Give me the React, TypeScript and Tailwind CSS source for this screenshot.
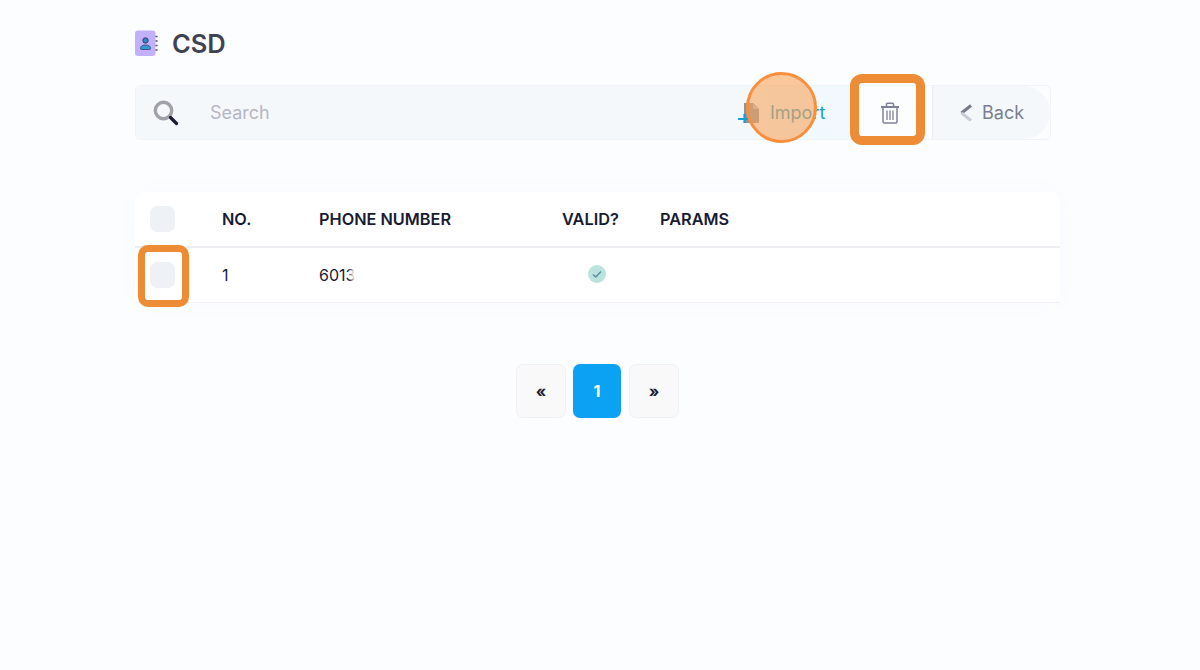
function ContactBook() {
  return (
    <svg width="23" height="27" viewBox="0 0 23 27" className="shrink-0">
      <rect x="0" y="0.5" width="20.500" height="25.500" rx="3" fill="#c3b0fa" />
      <circle cx="10.500" cy="10.500" r="2.700" fill="#2f86c9" stroke="#3b3a6b" strokeWidth="1" />
      <path d="M5.500 18.500c0-2.500 2-3.500 5-3.500s5 1 5 3.500c0 .6-.4 1-1 1h-8c-.6 0-1-.4-1-1z" fill="#2f9bd6" stroke="#3b3a6b" strokeWidth="0.800" />
      <path d="M20.500 6.500h2M20.500 11h2M20.500 15.500h2M20.500 20h2" stroke="#4a4a68" strokeWidth="1.600" />
    </svg>
  );
}

function SearchGlyph() {
  return (
    <svg width="26" height="26" viewBox="0 0 26 26">
      <circle cx="10.500" cy="10.500" r="8.200" fill="none" stroke="#a1a1aa" strokeWidth="3.400" />
      <path d="M17.500 17.500l6 6" stroke="#1b1b33" strokeWidth="3.200" strokeLinecap="round" />
    </svg>
  );
}

function ImportGlyph() {
  return (
    <svg width="24" height="24" viewBox="0 0 24 24" className="shrink-0">
      <path d="M7 2h9l6 6v13a1 1 0 0 1-1 1H8a1 1 0 0 1-1-1z" fill="#8a95a0" />
      <path d="M16 2l6 6h-6z" fill="#b6bdc4" />
      <path d="M1 18h12M7.500 13v9" stroke="#159fd6" strokeWidth="2.200" />
    </svg>
  );
}

function TrashGlyph() {
  return (
    <svg width="20" height="22" viewBox="0 0 20 22" fill="none" stroke="#7e8299" strokeWidth="1.500">
      <path d="M1 5h18" strokeWidth="2" />
      <path d="M6.500 4.500V2.200c0-.6.400-1 1-1h5c.6 0 1 .4 1 1v2.300" />
      <path d="M3 5v14.500c0 .8.600 1.500 1.500 1.500h11c.9 0 1.500-.7 1.500-1.500V5" />
      <path d="M7 8.500v9.500M10 8.500v9.500M13 8.500v9.500" strokeWidth="1.300" />
    </svg>
  );
}

function BackChevron() {
  return (
    <svg width="14" height="18" viewBox="0 0 14 18" fill="none" strokeWidth="3" className="shrink-0">
      <path d="M12 1.500L2.500 9" stroke="#75798b" />
      <path d="M2.500 9l9.500 7.500" stroke="#c9ccd6" />
    </svg>
  );
}

function CheckBox() {
  return <div className="h-[26px] w-[25px] rounded-[7px] bg-[#eef1f5]" />;
}

export default function App() {
  return (
    <div className="min-h-[670px] bg-[#fcfdff] pl-[135px] pr-[140px] pt-[30px] font-['Inter','Liberation_Sans',sans-serif]">
      <div className="flex h-[27px] items-center gap-[14px]">
        <ContactBook />
        <h1 className="pt-[2px] text-[25.500px] font-semibold text-[#3f4254]">CSD</h1>
      </div>

      <div className="relative mt-[28px] flex h-[55px] w-[916px] items-center rounded-[5px] border border-[#f0f3f7]">
        <div className="flex h-full flex-1 items-center rounded-l-[5px] bg-[#f5f8fb] pl-[17px]">
          <SearchGlyph />
          <span className="ml-[31px] text-[18px] text-[#b5b5c3]">Search</span>
        </div>
        <div className="flex h-full w-[140px] items-center gap-[9px] bg-gradient-to-r from-[#f5f8fb] via-[#f0f9fd] to-[#f1f9fd] pl-[23px]">
          <ImportGlyph />
          <span className="text-[18px] text-[#1f9cc4]">Import</span>
        </div>
        <div className="flex h-full w-[78px] items-center justify-center pr-[6px]">
          <TrashGlyph />
        </div>
        <div className="flex h-full w-[118px] border-l border-[#e8ecf1]">
          <div className="flex h-full w-[117px] items-center gap-[9px] rounded-r-[28px] bg-[#f5f8fb] pl-[26px]">
            <BackChevron />
            <span className="text-[18px] text-[#7a7e90]">Back</span>
          </div>
        </div>

        <div className="absolute left-[610px] top-[-14px] h-[71px] w-[71px] rounded-full border-[3px] border-[#f98f3c] bg-[#f9a45c]/60" />
        <div className="absolute left-[714px] top-[-12px] h-[71px] w-[75px] rounded-[12px] border-[9px] border-[#ee8c36]" />
      </div>

      <div className="relative mt-[52px] w-[925px] rounded-t-[10px] bg-white shadow-[0_0_30px_rgba(80,100,140,0.02)]">
        <div className="flex h-[56px] items-center border-b-2 border-[#eceef1] text-[16.300px] font-semibold text-[#181c32]">
          <div className="flex w-[87px] pl-[15px]">
            <CheckBox />
          </div>
          <div className="w-[97px]">NO.</div>
          <div className="w-[243px]">PHONE NUMBER</div>
          <div className="w-[98px]">VALID?</div>
          <div>PARAMS</div>
        </div>
        <div className="flex h-[55px] items-center border-b border-[#f1f2f5] text-[16px] text-[#181c32]">
          <div className="flex w-[87px] pl-[15px]">
            <CheckBox />
          </div>
          <div className="w-[97px]">1</div>
          <div className="w-[243px]">6013</div>
          <div className="flex w-[98px] pb-[2px] pl-[26px]">
            <div className="flex h-[18px] w-[18px] items-center justify-center rounded-full bg-[#b9e3dc]">
              <svg width="12" height="12" viewBox="0 0 12 12">
                <path d="M2 6.500l2.800 2.500L10 3.500" fill="none" stroke="#5b8fa8" strokeWidth="1.500" />
              </svg>
            </div>
          </div>
        </div>

        <div className="absolute left-[216px] top-[68px] h-[28px] w-[84px] rounded-full bg-white blur-[2px]" />
        <div className="absolute left-[3px] top-[53px] h-[62px] w-[51px] rounded-[10px] border-[7px] border-[#ee8c36]" />
      </div>

      <div className="mt-[61px] flex w-[925px] justify-center">
        <div className="flex h-[54px] w-[50px] items-center justify-center rounded-[7px] border border-[#f1f1f3] bg-[#f9f9f9] text-[16px] font-bold text-[#181c32]">«</div>
        <div className="ml-[7px] flex h-[54px] w-[48px] items-center justify-center rounded-[7px] bg-[#0ba2f4] text-[16px] font-bold text-white">1</div>
        <div className="ml-[8px] flex h-[54px] w-[50px] items-center justify-center rounded-[7px] border border-[#f1f1f3] bg-[#f9f9f9] text-[16px] font-bold text-[#181c32]">»</div>
      </div>
    </div>
  );
}
